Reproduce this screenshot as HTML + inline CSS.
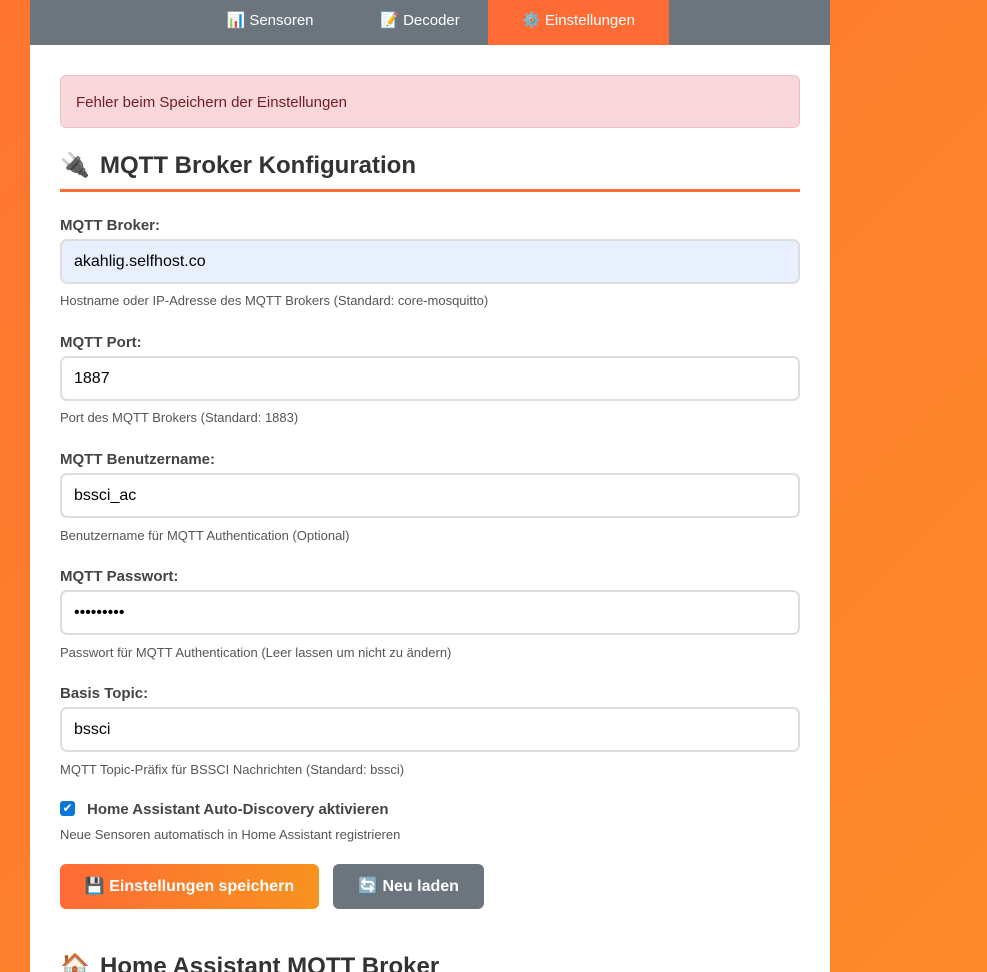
<!DOCTYPE html>
<html><head><meta charset="utf-8"><style>
*{box-sizing:border-box;margin:0;padding:0}
html,body{width:987px;height:972px;overflow:hidden}
body{background:linear-gradient(135deg,#ff7530 0%,#fd8a2a 100%);font-family:"Liberation Sans",sans-serif;position:relative}
.c{position:absolute;left:30px;top:0;width:800px;height:972px;background:#fff}
.nav{position:absolute;left:0;top:0;width:800px;height:45px;background:#6c757d}
.tab{position:absolute;top:0;height:45px;line-height:42px;color:#fff;font-size:15px;text-align:center}
.ab{position:absolute}
.alert{left:30px;top:75px;width:740px;height:53px;background:#f8d7da;border:1px solid #f1c0c5;border-radius:6px;color:#721c24;font-size:15px;line-height:53px;padding-left:15px}
h2{position:absolute;left:30px;font-size:24px;color:#333;font-weight:bold;white-space:nowrap}
h2 span{display:inline-block;width:40px}
.hr{left:30px;top:189px;width:740px;height:3px;background:#ff6b35}
.lb{left:30px;font-size:15px;font-weight:bold;color:#444}
.in{left:30px;width:740px;height:45px;border:2px solid #ddd;border-radius:7px;font-size:16px;color:#000;line-height:41px;padding-left:12px}
.hp{left:30px;font-size:13px;color:#555}
.btn{top:864px;height:45px;border-radius:6px;color:#fff;font-weight:bold;font-size:16px;line-height:46px;text-align:center}
</style></head><body>
<div class="c">
<div class="nav">
<div class="tab" style="left:180px;width:120px">📊 Sensoren</div>
<div class="tab" style="left:330px;width:120px">📝 Decoder</div>
<div class="tab" style="left:458px;width:181px;background:#ff6b35">⚙️ Einstellungen</div>
</div>
<div class="ab alert">Fehler beim Speichern der Einstellungen</div>
<h2 style="top:151px"><span>🔌</span>MQTT Broker Konfiguration</h2>
<div class="ab hr"></div>
<div class="ab lb" style="top:217px">MQTT Broker:</div>
<div class="ab in" style="top:239px;background:#e8f0fe">akahlig.selfhost.co</div>
<div class="ab hp" style="top:293px">Hostname oder IP-Adresse des MQTT Brokers (Standard: core-mosquitto)</div>
<div class="ab lb" style="top:334px">MQTT Port:</div>
<div class="ab in" style="top:356px">1887</div>
<div class="ab hp" style="top:410px">Port des MQTT Brokers (Standard: 1883)</div>
<div class="ab lb" style="top:451px">MQTT Benutzername:</div>
<div class="ab in" style="top:473px">bssci_ac</div>
<div class="ab hp" style="top:528px">Benutzername für MQTT Authentication (Optional)</div>
<div class="ab lb" style="top:568px">MQTT Passwort:</div>
<div class="ab in" style="top:590px">•••••••••</div>
<div class="ab hp" style="top:645px">Passwort für MQTT Authentication (Leer lassen um nicht zu ändern)</div>
<div class="ab lb" style="top:685px">Basis Topic:</div>
<div class="ab in" style="top:707px">bssci</div>
<div class="ab hp" style="top:762px">MQTT Topic-Präfix für BSSCI Nachrichten (Standard: bssci)</div>
<div class="ab" style="left:30px;top:801px;width:15px;height:15px;background:#0b75d9;border-radius:3px;color:#fff;font-size:12px;line-height:15px;text-align:center">✔</div>
<div class="ab lb" style="left:57px;top:801px">Home Assistant Auto-Discovery aktivieren</div>
<div class="ab hp" style="top:827px">Neue Sensoren automatisch in Home Assistant registrieren</div>
<div class="ab btn" style="left:30px;width:259px;background:linear-gradient(90deg,#ff6b35,#f7931e)">💾 Einstellungen speichern</div>
<div class="ab btn" style="left:303px;width:151px;background:#6c757d">🔄 Neu laden</div>
<h2 style="top:952px"><span>🏠</span>Home Assistant MQTT Broker</h2>
</div>
</body></html>
